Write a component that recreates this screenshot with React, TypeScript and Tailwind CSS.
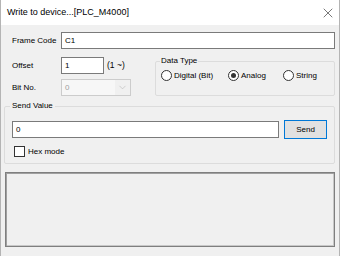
import { X, ChevronDown } from 'lucide-react'

function Radio({ label, checked }: { label: string; checked?: boolean }) {
  return (
    <label className="flex items-center gap-[2px] whitespace-nowrap">
      <span className="w-[11px] h-[11px] rounded-full border border-[#333333] bg-white flex items-center justify-center">
        {checked && <span className="w-[5px] h-[5px] rounded-full bg-[#333333]" />}
      </span>
      <span>{label}</span>
    </label>
  )
}

export default function App() {
  return (
    <div
      className="w-[342px] h-[256px] bg-white text-[8px] text-black leading-none whitespace-nowrap"
      style={{ fontFamily: '"Liberation Sans", Arial, sans-serif' }}
    >
      <div className="w-[340px] h-full border-x border-[#b4b4b4] flex flex-col">
        {/* title bar */}
        <div className="h-[25px] flex items-center justify-between pl-[6px] pr-[3px] bg-white shrink-0">
          <span className="text-[9px]">Write to device...[PLC_M4000]</span>
          <X size={16} strokeWidth={1} className="text-[#333333]" />
        </div>

        <div className="flex-1 bg-[#f0f0f0] pl-[3px] pr-[4px] pt-[7px] flex flex-col">
          {/* frame code */}
          <div className="flex items-center h-[17px]">
            <span className="w-[57px] pl-[8px]">Frame Code</span>
            <div className="flex-1 h-[17px] bg-white border border-[#7a7a7a] flex items-center pl-[3px]">C1</div>
          </div>

          {/* offset / bit no / data type */}
          <div className="flex mt-[8px]">
            <div className="flex flex-col gap-[5px]">
              <div className="flex items-center h-[17px]">
                <span className="w-[57px] pl-[8px]">Offset</span>
                <div className="w-[43px] h-[17px] bg-white border border-[#7a7a7a] flex items-center pl-[3px]">1</div>
                <span className="ml-[3px] text-[8.5px]">(1 ~)</span>
              </div>
              <div className="flex items-center h-[17px]">
                <span className="w-[57px] pl-[8px]">Bit No.</span>
                <div className="w-[70px] h-[17px] bg-[#f0f0f0] border border-[#cccccc] flex items-center">
                  <span className="flex-1 h-full bg-[#f7f7f7] flex items-center pl-[3px] text-[#a0a0a0]">0</span>
                  <ChevronDown size={11} strokeWidth={1.2} className="mx-[2px] text-[#b0b0b0]" />
                </div>
              </div>
            </div>
            <fieldset className="ml-auto w-[180px] h-[39px] border border-[#dcdcdc] rounded-[2px] px-[6px]">
              <legend className="ml-[-2px] px-[1px]">Data Type</legend>
              <div className="flex items-center h-[20px] pt-[1px] ml-[-1px]">
                <div className="w-[67px]">
                  <Radio label="Digital (Bit)" />
                </div>
                <div className="w-[55px]">
                  <Radio label="Analog" checked />
                </div>
                <Radio label="String" />
              </div>
            </fieldset>
          </div>

          {/* send value */}
          <fieldset className="mt-[6px] h-[62px] border border-[#dcdcdc] rounded-[2px] pl-[7px] pr-[7px]">
            <legend className="ml-[-2px] px-[2px]">Send Value</legend>
            <div className="flex items-center mt-[10px]">
              <div className="flex-1 h-[17px] bg-white border border-[#7a7a7a] flex items-center pl-[3px]">0</div>
              <button className="ml-[5px] w-[43px] h-[19px] bg-[#e1e1e1] border border-[#0078d7] flex items-center justify-center">
                Send
              </button>
            </div>
            <label className="flex items-center gap-[3px] mt-[7px] ml-[2px]">
              <span className="w-[11px] h-[11px] border border-[#333333] bg-white" />
              <span>Hex mode</span>
            </label>
          </fieldset>

          {/* output panel */}
          <div className="mt-[8px] ml-[1px] h-[75px] border border-[#7f7f7f] shadow-[inset_1px_1px_0_#a0a0a0,inset_-1px_-1px_0_#c8c8c8]" />
        </div>
      </div>
    </div>
  )
}
